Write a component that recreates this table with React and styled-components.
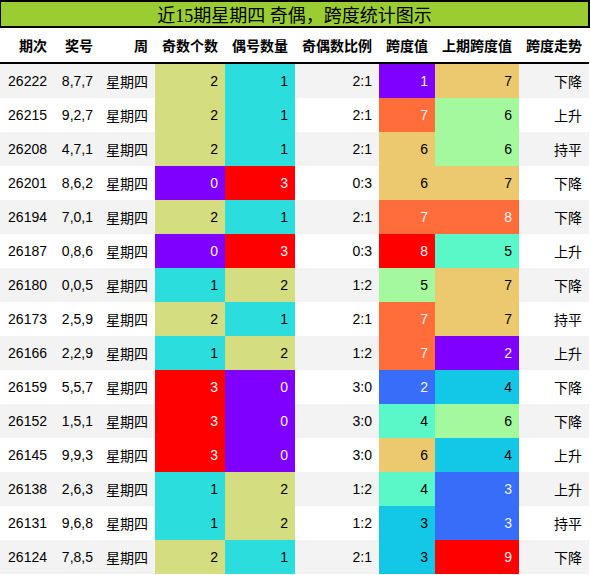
import styled, { createGlobalStyle } from 'styled-components';

const GlobalStyle = createGlobalStyle`
  body {
    margin: 0;
    background: #ffffff;
    font-family: 'Liberation Sans', Arial, 'Noto Sans CJK SC', sans-serif;
  }
`;

const Page = styled.div`
  width: 590px;
`;

const TitleBar = styled.div`
  height: 24px;
  background-color: #9acd32;
  border: 2px solid #000;
  border-left-width: 1px;
  display: flex;
  align-items: center;
  justify-content: center;
  font-family: 'Liberation Serif', 'Noto Sans CJK SC', serif;
  font-size: 18px;
  color: #000;
`;

const Table = styled.table`
  width: 589px;
  border-collapse: collapse;
  table-layout: fixed;
  font-size: 14px;
  color: #000;
`;

const HeadCell = styled.th`
  height: 34px;
  padding: 0 7px 0 0;
  text-align: right;
  font-weight: bold;
  border-bottom: 2px solid #000;
  white-space: nowrap;
`;

const Row = styled.tr`
  background-color: ${(p) => (p.$striped ? '#f3f3f3' : '#ffffff')};
`;

const Cell = styled.td`
  height: 34px;
  padding: 0 7px 0 0;
  text-align: right;
  white-space: nowrap;
  background-color: ${(p) => p.$bg || 'transparent'};
  color: ${(p) => (p.$light ? '#f1f1f1' : '#000')};
`;

const columns = [
  { title: '期次', width: 54 },
  { title: '奖号', width: 46 },
  { title: '周', width: 55 },
  { title: '奇数个数', width: 70 },
  { title: '偶号数量', width: 70 },
  { title: '奇偶数比例', width: 84 },
  { title: '跨度值', width: 56 },
  { title: '上期跨度值', width: 84 },
  { title: '跨度走势', width: 70 },
];

// rainbow scale, light text on the darker ends
const scale4 = [
  { bg: '#8000ff', light: true },
  { bg: '#2bdddd' },
  { bg: '#d4dd80' },
  { bg: '#ff0000', light: true },
];

const scale8 = [
  { bg: '#8000ff', light: true },
  { bg: '#386df9', light: true },
  { bg: '#12c8e6' },
  { bg: '#5af8c8' },
  { bg: '#a4f89e' },
  { bg: '#ecc86f' },
  { bg: '#ff6e3a', light: true },
  { bg: '#ff0000', light: true },
];

const rows = [
  ['26222', '8,7,7', 2, 1, '2:1', 1, 7, '下降'],
  ['26215', '9,2,7', 2, 1, '2:1', 7, 6, '上升'],
  ['26208', '4,7,1', 2, 1, '2:1', 6, 6, '持平'],
  ['26201', '8,6,2', 0, 3, '0:3', 6, 7, '下降'],
  ['26194', '7,0,1', 2, 1, '2:1', 7, 8, '下降'],
  ['26187', '0,8,6', 0, 3, '0:3', 8, 5, '上升'],
  ['26180', '0,0,5', 1, 2, '1:2', 5, 7, '下降'],
  ['26173', '2,5,9', 2, 1, '2:1', 7, 7, '持平'],
  ['26166', '2,2,9', 1, 2, '1:2', 7, 2, '上升'],
  ['26159', '5,5,7', 3, 0, '3:0', 2, 4, '下降'],
  ['26152', '1,5,1', 3, 0, '3:0', 4, 6, '下降'],
  ['26145', '9,9,3', 3, 0, '3:0', 6, 4, '上升'],
  ['26138', '2,6,3', 1, 2, '1:2', 4, 3, '上升'],
  ['26131', '9,6,8', 1, 2, '1:2', 3, 3, '持平'],
  ['26124', '7,8,5', 2, 1, '2:1', 3, 9, '下降'],
];

export default function App() {
  return (
    <Page>
      <GlobalStyle />
      <TitleBar>近15期星期四 奇偶，跨度统计图示</TitleBar>
      <Table>
        <colgroup>
          {columns.map((c) => (
            <col key={c.title} style={{ width: c.width }} />
          ))}
        </colgroup>
        <thead>
          <tr>
            {columns.map((c) => (
              <HeadCell key={c.title}>{c.title}</HeadCell>
            ))}
          </tr>
        </thead>
        <tbody>
          {rows.map((r, i) => {
            const [issue, nums, odd, even, ratio, span, prev, trend] = r;
            const oddC = scale4[odd];
            const evenC = scale4[even];
            const spanC = scale8[span - 1];
            const prevC = scale8[prev - 2];
            return (
              <Row key={issue} $striped={i % 2 === 0}>
                <Cell>{issue}</Cell>
                <Cell>{nums}</Cell>
                <Cell>星期四</Cell>
                <Cell $bg={oddC.bg} $light={oddC.light}>{odd}</Cell>
                <Cell $bg={evenC.bg} $light={evenC.light}>{even}</Cell>
                <Cell>{ratio}</Cell>
                <Cell $bg={spanC.bg} $light={spanC.light}>{span}</Cell>
                <Cell $bg={prevC.bg} $light={prevC.light}>{prev}</Cell>
                <Cell>{trend}</Cell>
              </Row>
            );
          })}
        </tbody>
      </Table>
    </Page>
  );
}
